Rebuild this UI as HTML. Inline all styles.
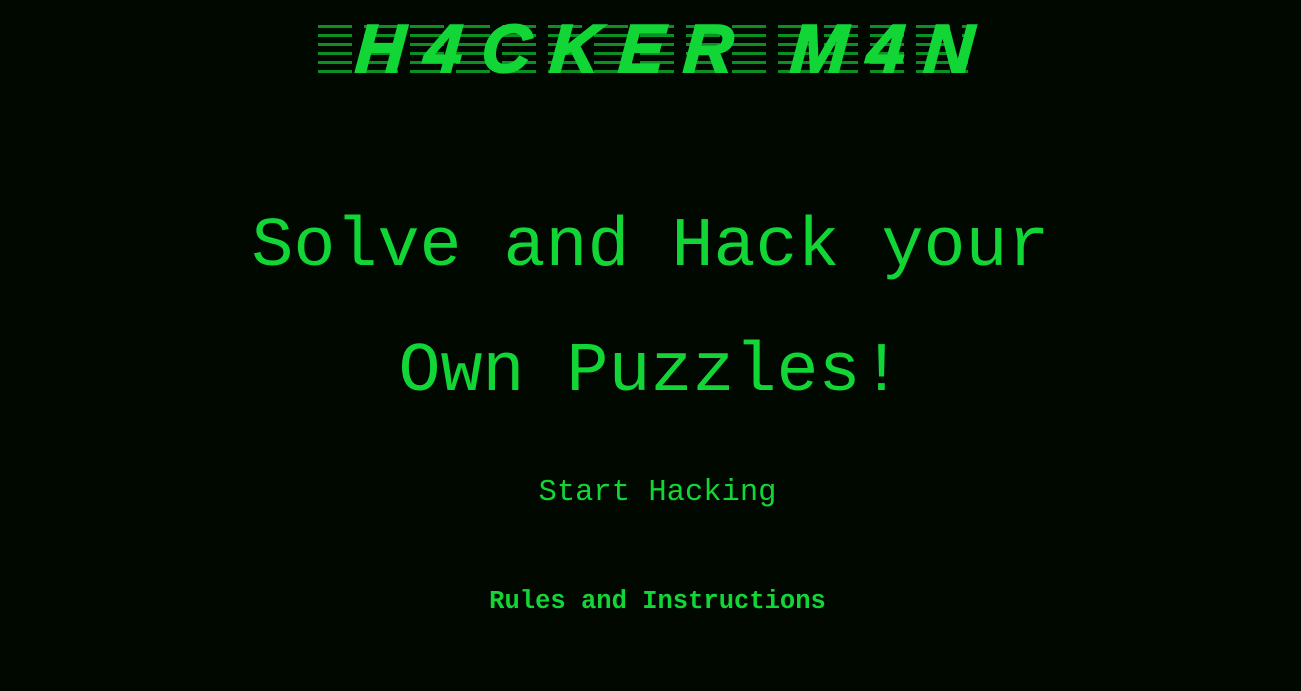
<!DOCTYPE html>
<html><head><style>
html,body{margin:0;padding:0;background:#000800;width:1301px;height:691px;overflow:hidden}
.logo{position:absolute;left:318px;top:14px;width:660px;height:66px;}
.lines{position:absolute;left:0;top:6px;width:650px;height:56px;
background:repeating-linear-gradient(to bottom,transparent 0 5px,#0fa82a 5px 8px,transparent 8px 9px);
-webkit-mask:repeating-linear-gradient(to right,#000 0 34px,transparent 34px 46px);opacity:.85}
.logotxt{position:absolute;left:38px;top:-4px;font:italic bold 68px "Liberation Sans",sans-serif;color:#12d636;-webkit-text-stroke:2px #12d636;letter-spacing:19.5px;white-space:nowrap;transform:skewX(-4deg)}
.h1{position:absolute;left:0;width:1301px;text-align:center;font:70px "Liberation Mono",monospace;color:#12d636;line-height:70px}
.a{position:absolute;left:7px;width:1301px;text-align:center;color:#12d636;font-family:"Liberation Mono",monospace}
</style></head><body>
<div class="logo"><div class="lines"></div><div class="logotxt">H4CKER M4N</div></div>
<div class="h1" style="top:213px">Solve and Hack your</div>
<div class="h1" style="top:338px">Own Puzzles!</div>
<div class="a" style="top:476px;font-size:30.5px">Start Hacking</div>
<div class="a" style="top:587px;font-size:25.5px;font-weight:bold">Rules and Instructions</div>
</body></html>
